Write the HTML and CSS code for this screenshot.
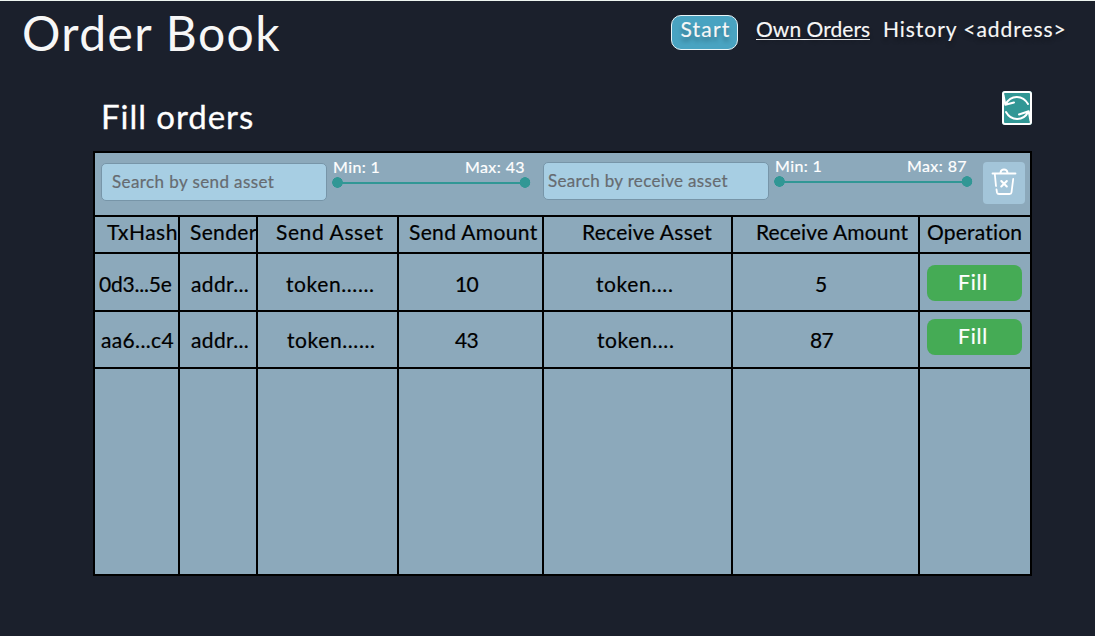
FILE: index.html
```html
<!DOCTYPE html>
<html lang="en">
<head>
<meta charset="utf-8">
<title>Order Book</title>
<link rel="stylesheet" href="styles.css">
</head>
<body>
<header class="top">
  <h1 class="brand">Order Book</h1>
  <nav class="nav">
    <button class="start">Start</button>
    <a class="own">Own Orders</a>
    <a class="history">History &lt;address&gt;</a>
  </nav>
</header>
<main class="main">
  <div class="heading">
    <h2 class="title">Fill orders</h2>
    <button class="refresh" aria-label="Refresh">
      <svg viewBox="0 0 30 34" width="30" height="34" fill="none" stroke="#fff" stroke-width="2" stroke-linecap="round" stroke-linejoin="round">
        <path d="M26 13C21 4 9 3 3.5 13.5M1.5 4L3.3 13.8L12 11.5M4 21C9 30 21 31 26.5 20.5M28.5 30L26.7 20.2L17 23.5"/>
      </svg>
    </button>
  </div>
  <section class="book">
    <div class="filters">
      <div class="search search-send">Search by send asset</div>
      <div class="range range-send">
        <div class="limits"><span>Min: 1</span><span>Max: 43</span></div>
        <div class="track"></div>
      </div>
      <div class="search search-receive">Search by receive asset</div>
      <div class="range range-receive">
        <div class="limits"><span>Min: 1</span><span>Max: 87</span></div>
        <div class="track"></div>
      </div>
      <button class="clear" aria-label="Clear filters">
        <svg viewBox="0 0 42 42" width="42" height="42" fill="none" stroke="#fff" stroke-width="1.8" stroke-linecap="round" stroke-linejoin="round">
          <path d="M9.5 11.5H32.5M17.5 11V10.5Q18 7.5 21 7.5Q24 7.5 24.5 10.5V11M11.8 12L13 24M13.5 27.5L14 30.5Q14.3 32 16 32H26.5Q28.3 32 28.5 30.3L30.2 17"/>
          <path d="M18.3 19L23.8 24.5M23.8 19L18.3 24.5" stroke-width="2.1"/>
        </svg>
      </button>
    </div>
    <div class="grid">
      <div class="cell h1c">TxHash</div><div class="cell h2c">Sender</div><div class="cell h3c">Send Asset</div><div class="cell h4c">Send Amount</div><div class="cell h5c">Receive Asset</div><div class="cell h6c">Receive Amount</div><div class="cell h7c">Operation</div>
      <div class="cell r1 c1 hash">0d3...5e</div><div class="cell r1 c2">addr...</div><div class="cell r1 c3">token......</div><div class="cell r1 c4">10</div><div class="cell r1 c5">token....</div><div class="cell r1 c6 single">5</div><div class="cell op1"><button class="fill">Fill</button></div>
      <div class="cell r2 c1">aa6...c4</div><div class="cell r2 c2">addr...</div><div class="cell r2 c3">token......</div><div class="cell r2 c4">43</div><div class="cell r2 c5">token....</div><div class="cell r2 c6">87</div><div class="cell op2"><button class="fill">Fill</button></div>
      <div class="cell"></div><div class="cell"></div><div class="cell"></div><div class="cell"></div><div class="cell"></div><div class="cell"></div><div class="cell"></div>
    </div>
  </section>
</main>
</body>
</html>
```
FILE: styles.css
```css
* { box-sizing: border-box; }
body {
  margin: 0;
  height: 636px;
  overflow: hidden;
  background: #1b202c;
  border-top: 1px solid #eef5f0;
  color: #f7f7f7;
  font-family: Lato, "Open Sans", sans-serif;
}
button { margin: 0; padding: 0; border: 0; font: inherit; color: inherit; }
.top { display: flex; justify-content: space-between; height: 85px; padding: 0 29px 0 22px; }
.brand { margin: 6px 0 0; font-size: 48px; line-height: 52px; font-weight: 400; letter-spacing: 1.4px; white-space: nowrap; }
.nav { display: flex; align-items: flex-start; font-size: 21px; line-height: 24px; white-space: nowrap; text-shadow: 0 4px 4px rgba(0,0,0,.3); -webkit-text-stroke: .15px; }
.start { width: 67px; height: 35px; margin: 14px 18px 0 0; padding: 0 0 8px 2px; line-height: 24px; border: 1px solid #e8f4f7; border-radius: 10px; background: #49a3c1; text-shadow: inherit; letter-spacing: 1.2px; }
.own { width: 114px; height: 23px; margin: 16px 13px 0 0; border-bottom: 1px solid #f7f7f7; letter-spacing: .05px; }
.history { width: 183px; margin-top: 16px; letter-spacing: .95px; }
.main { padding: 0 63px 0 93px; }
.heading { display: flex; justify-content: space-between; height: 65px; padding-left: 8px; }
.title { margin: 10px 0 0; font-size: 33px; line-height: 40px; font-weight: 400; color: #fff; letter-spacing: .95px; -webkit-text-stroke: .3px; }
.refresh { width: 30px; height: 34px; margin: 5px 0 0; background: #319795; border-radius: 3px; box-shadow: inset 0 0 0 2px #fff; overflow: hidden; }
.refresh svg, .clear svg { display: block; }
.book { width: 939px; height: 425px; border: 2px solid #000; background: #000; -webkit-text-stroke: .2px; }
.filters { display: flex; height: 62px; padding: 8px 5px 0 6px; background: #8ca9bb; }
.search { width: 226px; height: 38px; border: 1px solid #7795a8; border-radius: 5px; background: #a7cee3; color: #666b70; font-size: 17px; line-height: 36px; letter-spacing: .4px; white-space: nowrap; }
.search-send { margin-top: 2px; padding-left: 10px; }
.search-receive { margin: 1px 0 0 11px; padding-left: 4px; letter-spacing: .33px; }
.range { width: 199px; color: #fff; font-size: 16px; line-height: 13px; letter-spacing: .4px; }
.range-send { margin: -1px 1px 0 5px; }
.range-receive { margin: -2px 0 0 5px; }
.limits { display: flex; justify-content: space-between; height: 17px; padding: 0 6px 0 1px; }
.track { height: 11px; background: radial-gradient(circle at 5.5px 5.5px, #319795 5px, transparent 5.6px), radial-gradient(circle at 193px 5.5px, #319795 5px, transparent 5.6px), linear-gradient(#319795, #319795) 5px 5px / 188px 2px no-repeat; }
.clear { width: 42px; height: 42px; margin: 1px 0 0 auto; border-radius: 4px; background: #a3c5d9; }
.grid { display: grid; grid-template-columns: 83px 76px 139px 143px 187px 185px 110px; grid-template-rows: 35px 56px 55px 205px; gap: 2px; margin-top: 2px; }
.cell { background: #8ca9bb; color: #000; font-size: 21px; line-height: 29px; letter-spacing: .5px; white-space: nowrap; }
.h1c { padding-left: 12px; }
.h2c { padding-left: 10px; letter-spacing: .35px; }
.h3c { padding-left: 18px; letter-spacing: .6px; }
.h4c { padding-left: 10px; letter-spacing: .35px; }
.h5c { padding-left: 38px; letter-spacing: .25px; }
.h6c { padding-left: 23px; letter-spacing: .15px; }
.h7c { padding-left: 7px; letter-spacing: .2px; }
.r1 { padding-top: 15px; }
.r2 { padding-top: 13px; }
.c1 { padding-left: 6px; letter-spacing: .35px; }
.hash { padding-left: 4px; letter-spacing: -.2px; }
.c2 { padding-left: 11px; letter-spacing: .35px; }
.c3 { padding-left: 28px; letter-spacing: .6px; }
.c4 { padding-left: 56px; letter-spacing: -.8px; }
.c5 { padding-left: 52px; letter-spacing: .6px; }
.c6 { padding-left: 77px; letter-spacing: -.8px; }
.single { padding-left: 82px; }
.r2.c3 { padding-left: 29px; }
.r2.c5 { padding-left: 53px; }
.op1 { padding: 11px 0 0 7px; }
.op2 { padding: 7px 0 0 7px; }
.fill { display: block; width: 95px; height: 36px; padding: 0 3px 4px 0; border-radius: 8px; background: #45ab55; color: #fff; letter-spacing: .8px; }
```
